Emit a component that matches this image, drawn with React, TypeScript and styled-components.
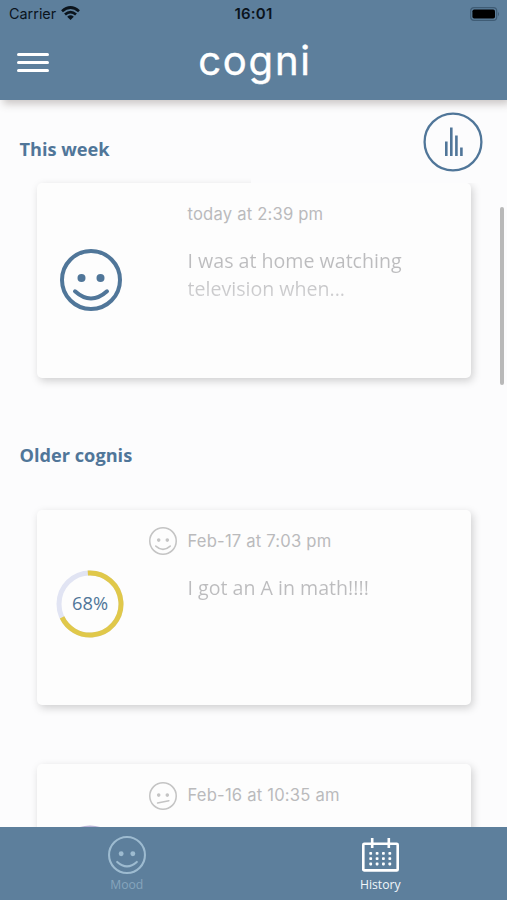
import React from "react";
import styled, { createGlobalStyle } from "styled-components";

const GlobalStyle = createGlobalStyle`
  * { box-sizing: border-box; }
  body { margin: 0; background: #fcfcfd; }
`;

const BLUE = "#5d7f9c";
const INK = "#507699";
const GREY = "#bababc";

const Screen = styled.div`
  display: flex;
  flex-direction: column;
  width: 507px;
  height: 900px;
  overflow: hidden;
  position: relative;
  background: #fcfcfd;
  font-family: "Open Sans", "Noto Sans", sans-serif;
`;

const TopBar = styled.header`
  flex: none;
  height: 100px;
  background: ${BLUE};
  box-shadow: 3px 4px 8px rgba(90, 75, 70, 0.3);
  z-index: 3;
`;

const StatusBar = styled.div`
  display: grid;
  grid-template-columns: 1fr auto 1fr;
  align-items: center;
  height: 27px;
  padding: 0 7px 0 9px;
  font-family: Inter, sans-serif;
  font-size: 14.4px;
  color: #0b141c;
`;

const Carrier = styled.div`
  display: flex;
  align-items: center;
  gap: 5px;
`;

const Clock = styled.div`
  margin-right: 2px;
  font-weight: 600;
  font-size: 15px;
  letter-spacing: 0.2px;
`;

const Battery = styled.div`
  display: flex;
  justify-content: flex-end;
`;

const NavRow = styled.div`
  display: grid;
  grid-template-columns: 1fr auto 1fr;
  align-items: center;
  height: 71px;
  padding: 0 17px;
`;

const MenuButton = styled.button`
  display: flex;
  flex-direction: column;
  gap: 5px;
  width: 32px;
  padding: 0;
  border: 0;
  background: none;
`;

const MenuLine = styled.span`
  height: 3px;
  border-radius: 1.5px;
  background: #fff;
`;

const Logo = styled.h1`
  margin: -4px 0 0 3px;
  font: 400 40px/46px Inter, sans-serif;
  letter-spacing: 1.8px;
  color: #fff;
  -webkit-text-stroke: 0.4px #fff;
  stroke-linejoin: round;
`;

const Content = styled.main`
  flex: 1;
  min-height: 0;
  overflow: hidden;
  display: flex;
  flex-direction: column;
`;

const SectionHead = styled.div`
  flex: none;
  display: flex;
  height: 82.5px;
  z-index: 1;
`;

const SectionTitle = styled.h2<{ $top: number }>`
  flex: 1;
  margin: 0;
  padding: ${(p) => p.$top}px 0 0 19.5px;
  font-size: 18.2px;
  line-height: 26px;
  font-weight: 700;
  color: ${INK};
`;

const ChartSlot = styled.div`
  flex: 1;
  display: flex;
  justify-content: flex-end;
  align-items: flex-start;
  padding: 12px 24px 0 0;
  background: #fcfcfd;
`;

const ChartButton = styled.button`
  display: flex;
  width: 60px;
  height: 60px;
  padding: 0;
  border: 0;
  background: none;
`;

const OlderHead = styled.div`
  flex: none;
  height: 131.5px;
`;

const Card = styled.article<{ $gap: number }>`
  flex: none;
  display: grid;
  grid-template-columns: 107px 43px 1fr;
  height: 195.5px;
  margin: 0 36px ${(p) => p.$gap}px 37px;
  border-radius: 5px;
  background: #fdfdfd;
  box-shadow: 2px 3px 8px rgba(0, 0, 0, 0.18);
`;

const Gauge = styled.div`
  display: flex;
  justify-content: center;
  align-items: flex-start;
  padding: 60.5px 1.5px 0 0;
`;

const FaceGauge = styled(Gauge)`
  padding: 66.5px 0 0;
`;

const SmallFace = styled.div`
  padding: 17.5px 0 0 5px;
`;

const Details = styled.div`
  padding: 19px 0 0 0.5px;
  color: ${GREY};
`;

const DateLine = styled.div`
  font: 400 16.6px/24px Inter, sans-serif;
  letter-spacing: 0.2px;
  white-space: nowrap;
`;

const Note = styled.p`
  margin: 21px 0 0;
  width: 230px;
  font-weight: 400;
  font-size: 19.6px;
  line-height: 28px;
  background: linear-gradient(#bcbcbe 0, #bcbcbe 26px, #d0d0d2 50px);
  background-clip: text;
  -webkit-background-clip: text;
  color: transparent;
`;

const ScrollThumb = styled.div`
  position: absolute;
  right: 3.5px;
  top: 207px;
  width: 4px;
  height: 178px;
  border-radius: 2px;
  background: #b9b9b9;
`;

const TabBar = styled.nav`
  flex: none;
  display: grid;
  grid-template-columns: 1fr 1fr;
  height: 73px;
  background: ${BLUE};
  z-index: 2;
`;

const Tab = styled.a<{ $active?: boolean }>`
  display: flex;
  flex-direction: column;
  align-items: center;
  padding-top: 9px;
  gap: 2px;
  font-size: 12.2px;
  line-height: 17px;
  color: ${(p) => (p.$active ? "#f0f6fa" : "#86a5bd")};
`;

type FaceProps = { size: number; color: string; stroke: number; flat?: boolean };

const Face = ({ size, color, stroke, flat }: FaceProps) => (
  <svg width={size} height={size} viewBox="0 0 62 62" fill="none" stroke={color} strokeWidth={stroke} strokeLinecap="round">
    <circle cx="31" cy="31" r={31 - stroke / 2} />
    <circle cx="21.5" cy="29" r="4" fill={color} stroke="none" />
    <circle cx="40.5" cy="29" r="4" fill={color} stroke="none" />
    <path d={flat ? "M19 46.5 44 41.5" : "M15 42.3Q31 56.7 47 42.3"} />
  </svg>
);

const Ring = ({ percent, track, label }: { percent: number; track: string; label?: string }) => (
  <svg width="68" height="68" viewBox="0 0 68 68" fill="none" strokeWidth="5">
    <circle cx="34" cy="34" r="31" stroke={track} />
    {percent > 0 && (
      <circle cx="34" cy="34" r="31" stroke="#e0c84a" pathLength="100" strokeDasharray={`${percent} 100`} transform="rotate(-94 34 34)" />
    )}
    {label && (
      <text x="34" y="40" textAnchor="middle" fill={INK} fontFamily="Open Sans, sans-serif" fontSize="18.3">{label}</text>
    )}
  </svg>
);

const Wifi = () => (
  <svg width="19" height="15" viewBox="0 0 19 15" fill="none" stroke="#0b141c" strokeWidth="2.7">
    <path d="M1 5.2Q9.5-2.2 18 5.2M4 8.6Q9.5 3.6 15 8.6" />
    <path d="M6.2 10.7Q9.5 8 12.8 10.7L9.5 14Z" fill="#0b141c" stroke="none" />
  </svg>
);

const BatteryIcon = () => (
  <svg width="30" height="14" viewBox="0 0 30 14">
    <rect x=".7" y=".7" width="26" height="12.6" rx="3.4" fill="none" stroke="#3f5c75" strokeWidth="1.2" />
    <rect x="2.4" y="2.4" width="22.6" height="9.2" rx="1.8" fill="#000" />
    <path d="M28 4.7Q30 7 28 9.3Z" fill="#3f5c75" />
  </svg>
);

const ChartIcon = () => (
  <svg width="60" height="60" viewBox="0 0 60 60" fill="none" stroke={INK}>
    <circle cx="30" cy="30" r="28.4" strokeWidth="2.3" />
    <path d="M23.3 29.5V44M28.3 15.5V44M33.4 23.5V44M38.4 35.5V44" strokeWidth="2.6" />
  </svg>
);

const CalendarIcon = () => (
  <svg width="37" height="38" viewBox="0 0 37 38" fill="none" stroke="#fff" strokeWidth="2.6">
    <rect x="1.3" y="7.8" width="34.4" height="26.6" rx="1" />
    <path d="M10.2 2V12M26.8 2V12" strokeWidth="2.6" />
    {[17.3, 22.7, 28].map((y) =>
      [8.7, 15.1, 21.4, 27.8].map((x) => (
        <rect key={`${x}-${y}`} x={x - 1.4} y={y - 1.4} width="2.8" height="2.8" rx=".8" fill="#fff" stroke="none" />
      ))
    )}
  </svg>
);

export default function App() {
  return (
    <Screen>
      <GlobalStyle />
      <TopBar>
        <StatusBar>
          <Carrier>Carrier <Wifi /></Carrier>
          <Clock>16:01</Clock>
          <Battery><BatteryIcon /></Battery>
        </StatusBar>
        <NavRow>
          <MenuButton aria-label="Menu"><MenuLine /><MenuLine /><MenuLine /></MenuButton>
          <Logo>cogni</Logo>
        </NavRow>
      </TopBar>
      <Content>
        <SectionHead>
          <SectionTitle $top={36}>This week</SectionTitle>
          <ChartSlot><ChartButton aria-label="Statistics"><ChartIcon /></ChartButton></ChartSlot>
        </SectionHead>
        <Card $gap={0}>
          <FaceGauge><Face size={62} color={INK} stroke={4} /></FaceGauge>
          <SmallFace />
          <Details>
            <DateLine>today at 2:39 pm</DateLine>
            <Note>I was at home watching television when...</Note>
          </Details>
        </Card>
        <OlderHead><SectionTitle $top={64}>Older cognis</SectionTitle></OlderHead>
        <Card $gap={59}>
          <Gauge><Ring percent={69} track="#e1e4f3" label="68%" /></Gauge>
          <SmallFace><Face size={28} color="#c4c4c4" stroke={3.4} /></SmallFace>
          <Details>
            <DateLine>Feb-17 at 7:03 pm</DateLine>
            <Note>I got an A in math!!!!</Note>
          </Details>
        </Card>
        <Card $gap={0}>
          <Gauge><Ring percent={0} track="#b9b4d6" /></Gauge>
          <SmallFace><Face size={28} color="#c4c4c4" stroke={3.4} flat /></SmallFace>
          <Details>
            <DateLine>Feb-16 at 10:35 am</DateLine>
          </Details>
        </Card>
      </Content>
      <TabBar>
        <Tab><Face size={38} color="#9dbbd0" stroke={3.4} />Mood</Tab>
        <Tab $active><CalendarIcon />History</Tab>
      </TabBar>
      <ScrollThumb />
    </Screen>
  );
}
